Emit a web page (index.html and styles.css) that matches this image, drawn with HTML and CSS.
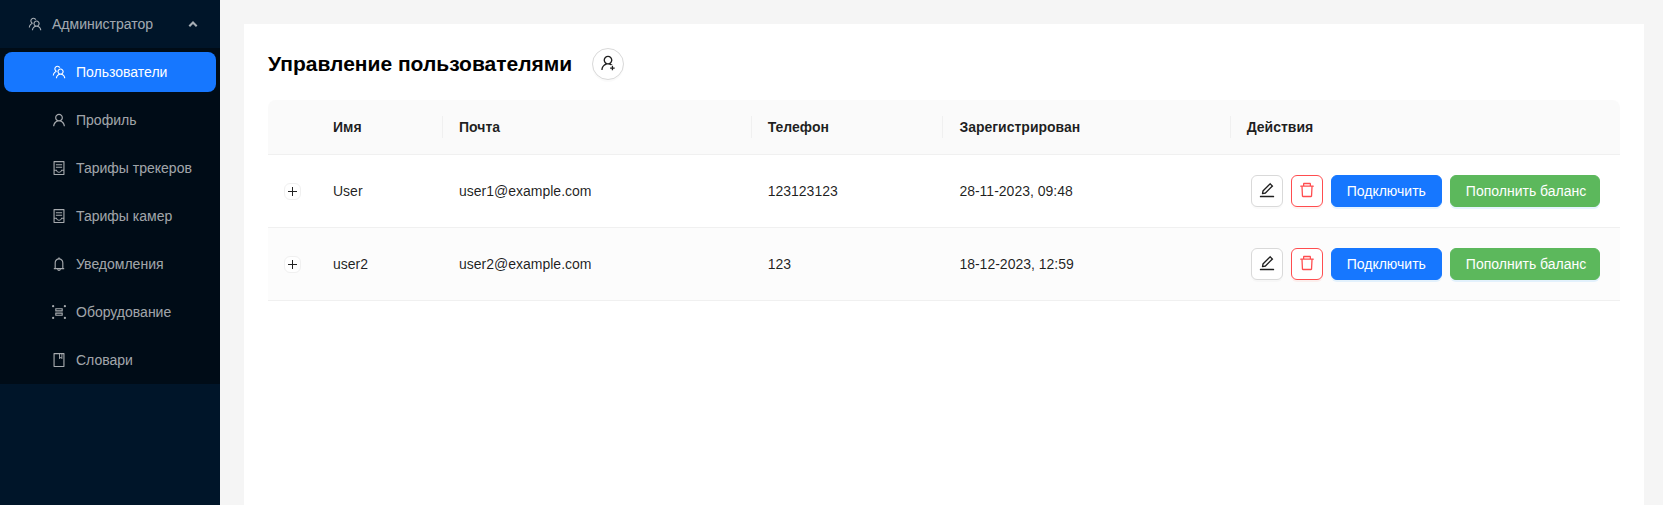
FILE: index.html
```html
<!DOCTYPE html>
<html lang="ru">
<head>
<meta charset="utf-8">
<title>Управление пользователями</title>
<link rel="stylesheet" href="styles.css">
</head>
<body>
<svg class="sprite" aria-hidden="true">
  <symbol id="team" viewBox="64 64 896 896"><path d="M824.2 699.9a301.55 301.55 0 00-86.4-60.4C783.1 602.8 812 546.8 812 484c0-110.8-92.4-201.7-203.2-200-109.1 1.7-197 90.6-197 200 0 62.8 29 118.8 74.2 155.5a300.95 300.95 0 00-86.4 60.4C345 754.6 314 826.8 312 903.8a8 8 0 008 8.2h56c4.3 0 7.9-3.4 8-7.7 1.9-58 25.4-112.3 66.7-153.5A226.62 226.62 0 01612 684c60.9 0 118.2 23.7 161.3 66.8C814.6 792 838 846.3 840 904.3c.1 4.3 3.7 7.7 8 7.7h56a8 8 0 008-8.2c-2-77-33-149.2-87.8-203.9zM612 612c-34.2 0-66.4-13.3-90.5-37.5a126.86 126.86 0 01-37.5-91.8c.3-32.8 13.4-64.5 36.3-88 24-24.6 56.1-38.3 90.4-38.7 33.9-.3 66.8 12.9 91 36.6 24.8 24.3 38.4 56.8 38.4 91.4 0 34.2-13.3 66.3-37.5 90.5A127.3 127.3 0 01612 612zM361.5 510.4c-.9-8.7-1.4-17.5-1.4-26.4 0-15.9 1.5-31.4 4.3-46.5.7-3.6-1.2-7.3-4.5-8.8-13.6-6.1-26.1-14.5-36.9-25.1a127.54 127.54 0 01-38.7-95.4c.9-32.1 13.8-62.6 36.3-85.6 24.7-25.3 57.9-39.1 93.2-38.7 31.9.3 62.7 12.6 86 34.4 7.9 7.4 14.7 15.6 20.4 24.4 2 3.1 5.9 4.4 9.3 3.2 17.6-6.1 36.2-10.4 55.3-12.4 5.6-.6 8.8-6.6 6.3-11.6-32.5-64.3-98.9-108.7-175.7-109.9-110.9-1.7-203.3 89.2-203.3 199.9 0 62.8 28.9 118.8 74.2 155.5-31.8 14.7-61.1 35-86.5 60.4-54.8 54.7-85.8 126.9-87.8 204a8 8 0 008 8.2h56.1c4.3 0 7.9-3.4 8-7.7 1.9-58 25.4-112.3 66.7-153.5 29.4-29.4 65.4-49.8 104.7-59.7 3.9-1 6.5-4.7 6-8.7z"/></symbol>
  <symbol id="user" viewBox="64 64 896 896"><path d="M858.5 763.6a374 374 0 00-80.6-119.5 375.63 375.63 0 00-119.5-80.6c-.4-.2-.8-.3-1.2-.5C719.5 518 760 444.7 760 362c0-137-111-248-248-248S264 225 264 362c0 82.7 40.5 156 102.8 201.1-.4.2-.8.3-1.2.5-44.8 18.9-85 46-119.5 80.6a375.63 375.63 0 00-80.6 119.5A371.7 371.7 0 00136 901.8a8 8 0 008 8.2h60c4.4 0 7.9-3.5 8-7.8 2-77.2 33-149.5 87.8-204.3 56.7-56.7 132-87.9 212.2-87.9s155.5 31.2 212.2 87.9C779 752.7 810 825 812 902.2c.1 4.4 3.6 7.8 8 7.8h60a8 8 0 008-8.2c-1-47.8-10.9-94.3-29.5-138.2zM512 534c-45.9 0-89.1-17.9-121.6-50.4S340 407.9 340 362c0-45.9 17.9-89.1 50.4-121.6S466.1 190 512 190s89.1 17.9 121.6 50.4S684 316.1 684 362c0 45.9-17.9 89.1-50.4 121.6S557.9 534 512 534z"/></symbol>
  <symbol id="container" viewBox="64 64 896 896"><path d="M832 64H192c-17.7 0-32 14.3-32 32v832c0 17.7 14.3 32 32 32h640c17.7 0 32-14.3 32-32V96c0-17.7-14.3-32-32-32zm-40 824H232V687h97.9c11.6 32.8 32 62.3 59.1 84.7 34.5 28.5 78.2 44.3 123 44.3s88.5-15.7 123-44.3c27.1-22.4 47.5-51.9 59.1-84.7H792v201zm0-264H643.6l-5.2 24.7C626.4 708.5 573.2 752 512 752s-114.4-43.5-126.5-103.3l-5.2-24.7H232V136h560v488zM320 341h384c4.4 0 8-3.6 8-8v-48c0-4.4-3.6-8-8-8H320c-4.4 0-8 3.6-8 8v48c0 4.4 3.6 8 8 8zm0 160h384c4.4 0 8-3.6 8-8v-48c0-4.4-3.6-8-8-8H320c-4.4 0-8 3.6-8 8v48c0 4.4 3.6 8 8 8z"/></symbol>
  <symbol id="bell" viewBox="64 64 896 896"><path d="M816 768h-24V428c0-141.1-104.3-257.8-240-277.2V112c0-22.1-17.9-40-40-40s-40 17.9-40 40v38.8C336.3 170.2 232 286.9 232 428v340h-24c-17.7 0-32 14.3-32 32v32c0 4.4 3.6 8 8 8h216c0 61.8 50.2 112 112 112s112-50.2 112-112h216c4.4 0 8-3.6 8-8v-32c0-17.7-14.3-32-32-32zM512 888c-26.5 0-48-21.5-48-48h96c0 26.5-21.5 48-48 48zM304 768V428c0-55.6 21.6-107.8 60.9-147.1S456.4 220 512 220c55.6 0 107.8 21.6 147.1 60.9S720 372.4 720 428v340H304z"/></symbol>
  <symbol id="ungroup" viewBox="64 64 896 896"><path d="M736 550H288c-8.8 0-16 7.2-16 16v176c0 8.8 7.2 16 16 16h448c8.8 0 16-7.2 16-16V566c0-8.8-7.2-16-16-16zm-56 136H344v-64h336v64zM736 266H288c-8.8 0-16 7.2-16 16v176c0 8.8 7.2 16 16 16h448c8.8 0 16-7.2 16-16V282c0-8.8-7.2-16-16-16zm-56 136H344v-64h336v64z"/><circle cx="136" cy="136" r="72"/><circle cx="888" cy="136" r="72"/><circle cx="136" cy="888" r="72"/><circle cx="888" cy="888" r="72"/></symbol>
  <symbol id="book" viewBox="64 64 896 896"><path d="M832 64H192c-17.7 0-32 14.3-32 32v832c0 17.7 14.3 32 32 32h640c17.7 0 32-14.3 32-32V96c0-17.7-14.3-32-32-32zm-260 72h96v209.9L621.5 312 572 347.4V136zm220 752H232V136h280v296.9c0 3.3 1 6.6 3 9.3a15.9 15.9 0 0022.3 3.7l83.8-59.9 81.4 59.4c2.7 2 6 3.1 9.4 3.1 8.8 0 16-7.2 16-16V136h64v752z"/></symbol>
  <symbol id="user-add" viewBox="64 64 896 896"><path d="M678.3 642.4c24.2-13 51.9-20.4 81.4-20.4h.1c3 0 4.4-3.6 2.2-5.6a371.67 371.67 0 00-103.7-65.8c-.4-.2-.8-.3-1.2-.5C719.2 505 759.6 431.7 759.6 349c0-137-110.8-248-247.5-248S264.7 212 264.7 349c0 82.7 40.4 156 102.6 201.1-.4.2-.8.3-1.2.5-44.7 18.9-84.8 46-119.3 80.6a373.42 373.42 0 00-80.4 119.5A373.6 373.6 0 00137 888.8a8 8 0 008 8.2h59.9c4.3 0 7.9-3.5 8-7.8 2-77.2 32.9-149.5 87.6-204.3C357 628.2 432.2 597 512.2 597c56.7 0 111.1 15.7 158 45.1a8.1 8.1 0 008.1.3zM512.2 521c-45.8 0-88.9-17.9-121.4-50.4A171.2 171.2 0 01340.5 349c0-45.9 17.9-89.1 50.3-121.6S466.3 177 512.2 177s88.9 17.9 121.4 50.4A171.2 171.2 0 01683.9 349c0 45.9-17.9 89.1-50.3 121.6C601.1 503.1 558 521 512.2 521zM880 759h-84v-84c0-4.4-3.6-8-8-8h-56c-4.4 0-8 3.6-8 8v84h-84c-4.4 0-8 3.6-8 8v56c0 4.4 3.6 8 8 8h84v84c0 4.4 3.6 8 8 8h56c4.4 0 8-3.6 8-8v-84h84c4.4 0 8-3.6 8-8v-56c0-4.4-3.6-8-8-8z"/></symbol>
  <symbol id="edit" viewBox="64 64 896 896"><path d="M257.7 752c2 0 4-.2 6-.5L431.9 722c2-.4 3.9-1.3 5.3-2.8l423.9-423.9a9.96 9.96 0 000-14.1L694.9 114.9c-1.9-1.9-4.4-2.9-7.1-2.9s-5.2 1-7.1 2.9L256.8 538.8c-1.5 1.5-2.4 3.3-2.8 5.3l-29.5 168.2a33.5 33.5 0 009.4 29.8c6.6 6.4 14.9 9.9 23.8 9.9zm67.4-174.4L687.8 215l73.3 73.3-362.7 362.6-88.9 15.7 15.6-89zM880 836H144c-17.7 0-32 14.3-32 32v36c0 4.4 3.6 8 8 8h784c4.4 0 8-3.6 8-8v-36c0-17.7-14.3-32-32-32z"/></symbol>
  <symbol id="delete" viewBox="64 64 896 896"><path d="M360 184h-8c4.4 0 8-3.6 8-8v8h304v-8c0 4.4 3.6 8 8 8h-8v72h72v-80c0-35.3-28.7-64-64-64H352c-35.3 0-64 28.7-64 64v80h72v-72zm504 72H160c-17.7 0-32 14.3-32 32v32c0 4.4 3.6 8 8 8h60.4l24.7 523c1.6 34.1 29.8 61 63.9 61h454c34.2 0 62.3-26.8 63.9-61l24.7-523H888c4.4 0 8-3.6 8-8v-32c0-17.7-14.3-32-32-32zM731.3 840H292.7l-24.2-512h487l-24.2 512z"/></symbol>
</svg>
<div class="layout">
  <nav class="sider">
    <div class="menu-title">
      <svg class="icon"><use href="#team"/></svg><span>Администратор</span>
      <svg class="arrow" viewBox="0 0 10 10"><path d="M1.3 7.3L5 3.6l3.7 3.7"/></svg>
    </div>
    <div class="submenu">
      <a class="item active"><svg class="icon"><use href="#team"/></svg><span>Пользователи</span></a>
      <a class="item"><svg class="icon"><use href="#user"/></svg><span>Профиль</span></a>
      <a class="item"><svg class="icon"><use href="#container"/></svg><span>Тарифы трекеров</span></a>
      <a class="item"><svg class="icon"><use href="#container"/></svg><span>Тарифы камер</span></a>
      <a class="item"><svg class="icon"><use href="#bell"/></svg><span>Уведомления</span></a>
      <a class="item"><svg class="icon"><use href="#ungroup"/></svg><span>Оборудование</span></a>
      <a class="item"><svg class="icon"><use href="#book"/></svg><span>Словари</span></a>
    </div>
  </nav>
  <main class="content">
    <header class="heading">
      <h2>Управление пользователями</h2>
      <button class="btn round" aria-label="Добавить"><svg class="icon large"><use href="#user-add"/></svg></button>
    </header>
    <table class="users">
      <colgroup><col class="c-expand"><col class="c-name"><col class="c-mail"><col class="c-phone"><col class="c-date"><col></colgroup>
      <thead>
        <tr><th></th><th class="sep">Имя</th><th class="sep">Почта</th><th class="sep">Телефон</th><th class="sep">Зарегистрирован</th><th>Действия</th></tr>
      </thead>
      <tbody>
        <tr>
          <td><button class="expand" aria-label="Развернуть"></button></td>
          <td>User</td><td>user1@example.com</td><td>123123123</td><td>28-11-2023, 09:48</td>
          <td><div class="actions">
            <button class="btn square" aria-label="Изменить"><svg class="icon large"><use href="#edit"/></svg></button>
            <button class="btn square danger" aria-label="Удалить"><svg class="icon large"><use href="#delete"/></svg></button>
            <button class="btn primary">Подключить</button>
            <button class="btn primary success">Пополнить баланс</button>
          </div></td>
        </tr>
        <tr class="striped">
          <td><button class="expand" aria-label="Развернуть"></button></td>
          <td>user2</td><td>user2@example.com</td><td>123</td><td>18-12-2023, 12:59</td>
          <td><div class="actions">
            <button class="btn square" aria-label="Изменить"><svg class="icon large"><use href="#edit"/></svg></button>
            <button class="btn square danger" aria-label="Удалить"><svg class="icon large"><use href="#delete"/></svg></button>
            <button class="btn primary">Подключить</button>
            <button class="btn primary success">Пополнить баланс</button>
          </div></td>
        </tr>
      </tbody>
    </table>
  </main>
</div>
</body>
</html>
```
FILE: styles.css
```css
* { box-sizing: border-box; }
body {
  margin: 0;
  font: 14px/22px "Liberation Sans", Arial, sans-serif;
  color: rgba(0, 0, 0, 0.88);
  background: #f5f5f5;
}
.sprite { display: none; }
.layout { display: flex; height: 100vh; overflow: hidden; }

/* Sidebar */
.sider { width: 220px; flex: none; background: #001529; color: rgba(255, 255, 255, 0.65); }
.icon { width: 14px; height: 14px; flex: none; fill: currentColor; }
.icon.large { width: 16px; height: 16px; margin-bottom: 2px; }
.menu-title { display: flex; align-items: center; gap: 10px; height: 48px; padding: 0 22px 0 28px; }
.arrow { width: 10px; height: 10px; margin-left: auto; fill: none; stroke: currentColor; stroke-width: 2.1; }
.submenu { background: #000c17; padding: 4px; display: flex; flex-direction: column; gap: 8px; }
.item { display: flex; align-items: center; gap: 10px; height: 40px; padding-left: 48px; border-radius: 8px; }
.item.active { background: #1677ff; color: #fff; }

/* Content card */
.content { flex: 1; margin: 24px 19px 0 24px; padding: 24px; background: #fff; }
.heading { display: flex; align-items: center; gap: 20px; height: 32px; margin-bottom: 20px; }
.heading h2 { margin: 0; font-size: 21px; line-height: 32px; color: #000; }

.btn {
  display: inline-flex; align-items: center; justify-content: center; flex: none;
  height: 32px; padding: 0 15px; white-space: nowrap;
  font: inherit; color: rgba(0, 0, 0, 0.88);
  background: #fff; border: 1px solid #d9d9d9; border-radius: 6px;
  box-shadow: 0 2px 0 rgba(0, 0, 0, 0.02);
}
.btn.round { width: 32px; padding: 0; border-radius: 50%; }
.btn.square { width: 32px; padding: 0; }
.btn.danger { color: #ff4d4f; border-color: #ff4d4f; box-shadow: 0 2px 0 rgba(255, 38, 5, 0.06); }
.btn.primary { color: #fff; background: #1677ff; border-color: #1677ff; box-shadow: 0 2px 0 rgba(5, 145, 255, 0.1); }
.btn.success { width: 150px; padding-right: 0; justify-content: flex-start; background: #5cb85c; border-color: #5cb85c; }

/* Users table */
.users { width: 100%; table-layout: fixed; border-collapse: separate; border-spacing: 0; }
.c-expand { width: 49px; }
.c-name { width: 126px; }
.c-mail { width: 308.7px; }
.c-phone { width: 191.7px; }
.c-date { width: 287.3px; }
.users th, .users td { padding: 16px; text-align: left; border-bottom: 1px solid #f0f0f0; }
.users th { height: 55px; background: #fafafa; font-weight: 600; }
.users th:first-child { border-top-left-radius: 8px; }
.users th:last-child { border-top-right-radius: 8px; }
.users th.sep {
  background: linear-gradient(#f0f0f0, #f0f0f0) right center / 1px 22px no-repeat #fafafa;
}
.users .striped td { background: #fcfcfc; }
.actions { display: flex; gap: 8px; padding: 4px; }
.expand {
  display: block; width: 17px; height: 17px; padding: 0;
  border: 1px solid #f0f0f0; border-radius: 6px;
  background:
    linear-gradient(#222, #222) center / 9px 1px no-repeat,
    linear-gradient(#222, #222) center / 1px 9px no-repeat, #fff;
}
```
